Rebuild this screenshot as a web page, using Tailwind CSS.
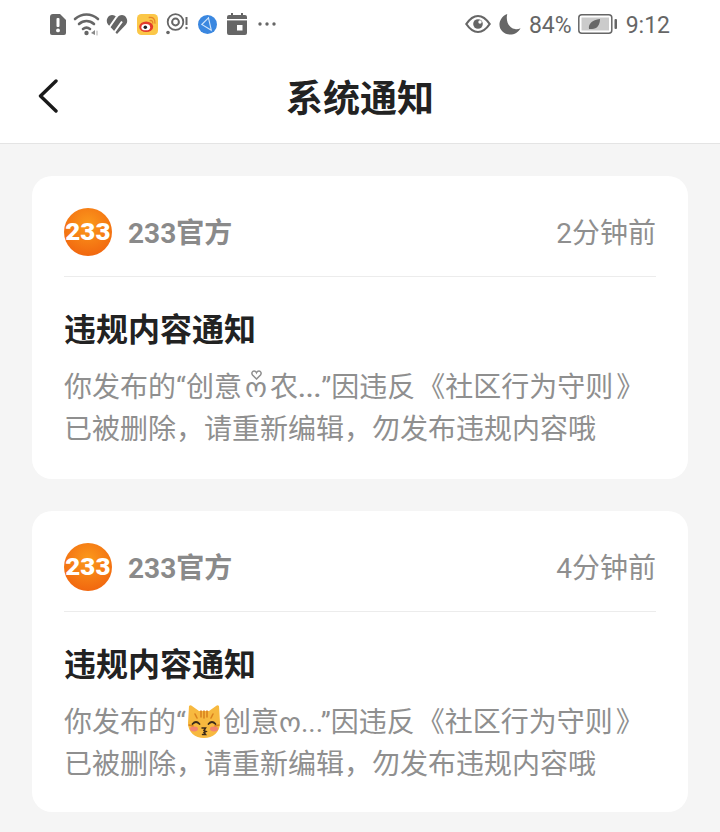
<!DOCTYPE html>
<html lang="zh-CN">
<head>
    <meta charset="UTF-8">
    <meta name="viewport" content="width=device-width, initial-scale=1.0">
    <title>系统通知</title>
    <script src="https://cdn.jsdelivr.net/npm/@tailwindcss/browser@4"></script>
</head>
<body class="w-[720px] h-[832px] overflow-hidden bg-[#f5f5f5] font-['Roboto','Noto_Sans_CJK_SC',sans-serif]">

    <!-- Top: status bar + nav -->
    <div class="bg-white border-b border-[#e4e4e4] h-[144px]">
        <div class="h-[48px] flex items-center justify-between pl-[50px] pr-[50px] text-[#666]">
            <div class="flex items-center">
                <!-- alert sim -->
                <svg class="w-[16px] h-[21px]" viewBox="0 0 16 21"><path d="M3 0h7l6 6v13a2 2 0 0 1-2 2H2a2 2 0 0 1-2-2V3a3 3 0 0 1 3-3z" fill="#666"/><rect x="6.500" y="4" width="3" height="9" rx="1" fill="#fff"/><circle cx="8" cy="16.400" r="1.900" fill="#fff"/></svg>
                <!-- wifi -->
                <svg class="w-[27px] h-[24px] ml-[7px]" viewBox="0 0 27 24" fill="none" stroke="#666" stroke-width="2.600" stroke-linecap="round"><path d="M2 7c7-6 16-6 23 0"/><path d="M6 12c4.500-4 10.500-4 15 0"/><path d="M10 17c2-1.500 5-1.500 7 0"/><circle cx="13.500" cy="21" r="2.200" fill="#666" stroke="none"/><path d="M22 18l-4 3 4 2z" fill="#888" stroke="none"/><path d="M24 19v4" stroke="#bbb" stroke-width="1.200"/></svg>
                <!-- striped heart -->
                <svg class="w-[22px] h-[20px] ml-[6px]" viewBox="0 0 22 20"><path d="M11 20L2 10.500C-1 6.500 2 1 6 1c2 0 4 1 5 3 1-2 3-3 5-3 4 0 7 5.500 4 9.500z" fill="#666"/><path d="M3.500 13L10.500 3M8.500 18L16 7.500" stroke="#fff" stroke-width="2" fill="none"/></svg>
                <!-- weibo -->
                <svg class="w-[21px] h-[21px] ml-[9px]" viewBox="0 0 24 24"><rect width="24" height="24" rx="5" fill="#fbc748"/><ellipse cx="10.500" cy="14.500" rx="8" ry="6" fill="#e33b2c"/><ellipse cx="10" cy="15" rx="5" ry="3.700" fill="#fff"/><circle cx="9.500" cy="15" r="2" fill="#222"/><path d="M14 4c4-1 7 2 6.500 6.500M15 7.500c2-.5 3.200 1 3 3" fill="none" stroke="#e8842a" stroke-width="1.500" stroke-linecap="round"/></svg>
                <!-- target with mark -->
                <svg class="w-[23px] h-[22px] ml-[8px]" viewBox="0 0 23 22" fill="none" stroke="#666"><circle cx="9.500" cy="9" r="7.800" stroke-width="1.800"/><circle cx="9.500" cy="9" r="3.400" stroke-width="2"/><circle cx="2" cy="19.500" r="1.800" fill="#666" stroke="none"/><path d="M20.500 4v8" stroke-width="2"/><circle cx="20.500" cy="15" r="1.200" fill="#666" stroke="none"/></svg>
                <!-- blue app -->
                <svg class="w-[19px] h-[19px] ml-[9px]" viewBox="0 0 20 20"><circle cx="10" cy="10" r="10" fill="#3a87e0"/><path d="M11 3L4 10l10 6zM11 3l3 13" fill="none" stroke="#cfe4fb" stroke-width="1.200"/></svg>
                <!-- calendar -->
                <svg class="w-[20px] h-[22px] ml-[10px]" viewBox="0 0 20 22"><path d="M4 0h2v2h8V0h2v2h2a2 2 0 0 1 2 2v16a2 2 0 0 1-2 2H2a2 2 0 0 1-2-2V4a2 2 0 0 1 2-2h2z" fill="#666"/><rect x="0" y="6" width="20" height="1.400" fill="#fff"/><rect x="10" y="12" width="5.500" height="5.500" fill="#fff"/></svg>
                <!-- more -->
                <svg class="w-[18px] h-[6px] ml-[11px]" viewBox="0 0 18 6" fill="#666"><circle cx="2" cy="3" r="1.700"/><circle cx="9" cy="3" r="1.700"/><circle cx="16" cy="3" r="1.700"/></svg>
            </div>
            <div class="flex items-center">
                <!-- eye -->
                <svg class="w-[26px] h-[20px]" viewBox="0 0 26 20" fill="none" stroke="#666" stroke-width="2.200"><path d="M1.300 10C5 4.500 8.500 2 13 2s8 2.500 11.700 8C21 15.500 17.500 18 13 18S5 15.500 1.300 10z"/><circle cx="13" cy="10" r="4.800" fill="#666" stroke="none"/><circle cx="15" cy="8" r="1.700" fill="#fff" stroke="none"/></svg>
                <!-- moon -->
                <svg class="w-[22px] h-[22px] ml-[8px]" viewBox="0 0 24 24"><path d="M9 1C3.500 3 .5 8 .5 12.500 .5 18.500 5.500 23.500 12 23.500c5 0 9-2.500 11.500-7-2 1-4 1.500-6 1C11 17 7 9 9 1z" fill="#666"/></svg>
                <span class="ml-[8px] mt-[2px] text-[23px] leading-none text-[#666]">84%</span>
                <!-- battery -->
                <svg class="w-[39px] h-[20px] ml-[6px]" viewBox="0 0 39 20"><rect x=".8" y=".8" width="33" height="18.400" rx="3" fill="none" stroke="#666" stroke-width="1.500"/><rect x="3.500" y="3.500" width="27.500" height="13" fill="#cbcbcb"/><path d="M11 15c-1-5 3-9 11-10 0 6-3 10-8 10-1 0-2 0-3 0z" fill="#666"/><rect x="36.500" y="5" width="2.500" height="10" rx="1" fill="#666"/></svg>
                <span class="ml-[9px] mt-[2px] text-[23px] leading-none text-[#666]">9:12</span>
            </div>
        </div>
        <div class="relative h-[95px] flex items-center justify-center">
            <svg class="absolute left-[38px] top-[31px] w-[20px] h-[34px]" viewBox="0 0 20 34" fill="none" stroke="#1a1a1a" stroke-width="3.400" stroke-linecap="round" stroke-linejoin="round"><path d="M18 2L2.500 17 18 32"/></svg>
            <h1 class="text-[37px] leading-none font-bold text-[#222] mt-[8px]">系统通知</h1>
        </div>
    </div>

    <!-- Notifications -->
    <div class="px-[32px] pt-[32px] flex flex-col gap-[32px]">

        <div class="bg-white rounded-[20px] h-[303px] px-[32px]">
            <div class="h-[101px] pt-[12px] border-b border-[#ececec] flex items-center justify-between">
                <div class="flex items-center gap-[16px]">
                    <div class="w-[48px] h-[48px] rounded-full bg-[radial-gradient(circle_at_50%_35%,#fb9a1c,#f26a10_75%,#ee5a0c)] flex items-center justify-center text-white text-[24px] font-black font-['Roboto']"><span class="scale-x-[1.08]">233</span></div>
                    <span class="mt-[4px] text-[28px] font-bold text-[#8a8a8a]">233官方</span>
                </div>
                <span class="mt-[4px] text-[28px] text-[#8f8f8f]">2分钟前</span>
            </div>
            <h2 class="mt-[32px] text-[32px] leading-[42px] font-bold text-[#222]">违规内容通知</h2>
            <p class="mt-[16px] text-[28px] leading-[42px] text-[#8f8f8f] whitespace-nowrap">你发布的“创意<span class="relative inline-block w-[28px] text-center font-['DejaVu_Sans']">ო<svg class="absolute left-[9px] top-[3px] w-[11px] h-[10px]" viewBox="0 0 11 10" fill="none" stroke="#8f8f8f" stroke-width="1.500"><path d="M5.500 9L1.500 5C0 3 1.500 1 3 1c1.200 0 2 .7 2.500 1.800C6 1.700 6.800 1 8 1c1.500 0 3 2 1.500 4z"/></svg></span>农<span class="font-medium">...</span>”因违反<span class="ml-[2px]">《</span>社区行为守则<span class="ml-[3px]">》</span><br>已被删除，请重新编辑，勿发布违规内容哦</p>
        </div>

        <div class="bg-white rounded-[20px] h-[301px] px-[32px]">
            <div class="h-[101px] pt-[12px] border-b border-[#ececec] flex items-center justify-between">
                <div class="flex items-center gap-[16px]">
                    <div class="w-[48px] h-[48px] rounded-full bg-[radial-gradient(circle_at_50%_35%,#fb9a1c,#f26a10_75%,#ee5a0c)] flex items-center justify-center text-white text-[24px] font-black font-['Roboto']"><span class="scale-x-[1.08]">233</span></div>
                    <span class="mt-[4px] text-[28px] font-bold text-[#8a8a8a]">233官方</span>
                </div>
                <span class="mt-[4px] text-[28px] text-[#8f8f8f]">4分钟前</span>
            </div>
            <h2 class="mt-[32px] text-[32px] leading-[42px] font-bold text-[#222]">违规内容通知</h2>
            <p class="mt-[16px] text-[28px] leading-[42px] text-[#8f8f8f] whitespace-nowrap">你发布的“<svg class="inline-block align-[-7px] w-[36px] h-[34px]" viewBox="0 0 36 34"><path d="M3 1c1-1 2-1 3 0l7 5h10l7-5c1-1 2-1 3 0l1 17c0 9-7 15-16 15S2 27 2 18z" fill="#f7b93f"/><path d="M15 6v6M18 6v7M21 6v6M9 9l2 4M27 9l-2 4M3 20l4 1M33 20l-4 1" stroke="#d9821f" stroke-width="1.600" stroke-linecap="round"/><ellipse cx="8" cy="24" rx="4" ry="2.400" fill="#f2846f"/><ellipse cx="28" cy="24" rx="4" ry="2.400" fill="#f2846f"/><path d="M6.500 19q3.500-4 7 0M22.500 19q3.500-4 7 0" fill="none" stroke="#3b2a1a" stroke-width="1.800" stroke-linecap="round"/><path d="M16 23h3.500l-1.500 2.500 2 1-2 1 1.500 2h-3" fill="none" stroke="#3b2a1a" stroke-width="1.500" stroke-linecap="round"/></svg><span class="ml-[1px]">创意</span><span class="inline-block w-[22px] text-right font-['DejaVu_Sans']">ო</span>...”因违反<span class="ml-[2px]">《</span>社区行为守则<span class="ml-[3px]">》</span><br>已被删除，请重新编辑，勿发布违规内容哦</p>
        </div>
    </div>

</body>
</html>
